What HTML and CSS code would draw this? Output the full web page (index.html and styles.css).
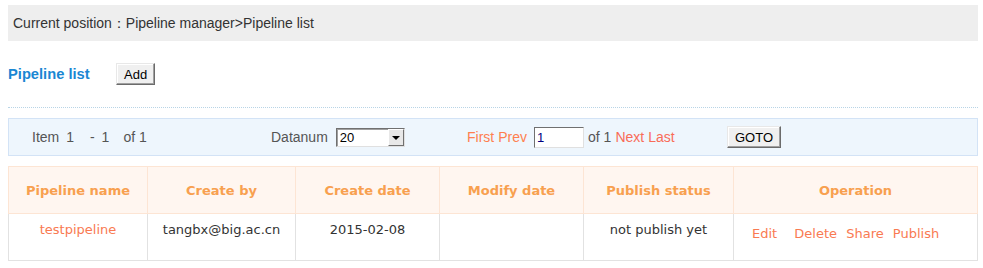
FILE: index.html
```html
<!DOCTYPE html>
<html lang="en">
  <head>
    <meta charset="UTF-8" />
    <title>Pipeline list</title>
    <link rel="stylesheet" href="styles.css">
  </head>
  <body>
    <div class="page">
      <div class="crumb">Current position：Pipeline manager&gt;Pipeline list</div>

      <div class="toolbar">
        <span class="list-title">Pipeline list</span>
        <button class="btn">Add</button>
      </div>

      <div class="pager">
        <div class="pager-items">
          Item <span class="num">1</span><span class="dash">-</span><span class="num">1</span><span class="of">of 1</span>
        </div>
        <div class="pager-size">
          Datanum
          <span class="select-wrap">
            <select class="select">
              <option>20</option>
              <option>50</option>
              <option>100</option>
            </select>
            <span class="select-arrow"></span>
          </span>
        </div>
        <div class="pager-nav">
          <a href="#" class="link-first">First</a>
          <a href="#" class="link-first">Prev</a>
          <input type="text" class="page-input" value="1">
          <span class="total">of 1</span>
          <a href="#" class="link-next">Next</a>
          <a href="#" class="link-next">Last</a>
        </div>
        <button class="btn btn-goto">GOTO</button>
      </div>

      <table class="grid">
        <colgroup>
          <col style="width: 139px">
          <col style="width: 148px">
          <col style="width: 144px">
          <col style="width: 144px">
          <col style="width: 150px">
          <col>
        </colgroup>
        <thead>
          <tr>
            <th>Pipeline name</th>
            <th>Create by</th>
            <th>Create date</th>
            <th>Modify date</th>
            <th>Publish status</th>
            <th>Operation</th>
          </tr>
        </thead>
        <tbody>
          <tr>
            <td><a href="#" class="name-link">testpipeline</a></td>
            <td>tangbx@big.ac.cn</td>
            <td>2015-02-08</td>
            <td></td>
            <td>not publish yet</td>
            <td class="ops">
              <a href="#">Edit</a>
              <a href="#" class="op-delete">Delete</a>
              <a href="#">Share</a>
              <a href="#">Publish</a>
            </td>
          </tr>
        </tbody>
      </table>
    </div>
  </body>
</html>
```

FILE: styles.css
```css
body {
  margin: 0;
  padding: 5px 6px 0 8px;
  background-color: #ffffff;
  font-family: "Liberation Sans", Arial, sans-serif;
  font-size: 14px;
  color: #333333;
}

.page {
  width: 970px;
}

.crumb {
  background-color: #eeeeee;
  height: 36px;
  line-height: 36px;
  padding-left: 5px;
  color: #333333;
}

.toolbar {
  display: flex;
  align-items: flex-start;
  height: 44px;
  margin-top: 17px;
  border-bottom: 1px dotted #b8d4e6;
  padding-bottom: 5px;
}

.list-title {
  color: #1a87d3;
  font-weight: bold;
  font-size: 14.7px;
  width: 108px;
  line-height: 32px;
}

.btn {
  font-family: "Liberation Sans", Arial, sans-serif;
  font-size: 13px;
  color: #000000;
  background-color: #f0f0f0;
  border: 1px solid;
  border-color: #e8e8e8 #6b6b6b #6b6b6b #e8e8e8;
  box-shadow: inset -1px -1px 0 #a0a0a0, inset 1px 1px 0 #ffffff;
  height: 22px;
  padding: 0 7px;
  margin-top: 5px;
}

.pager {
  display: flex;
  align-items: center;
  height: 36px;
  margin-top: 10px;
  background-color: #eef6fd;
  border: 1px solid #d3e3f6;
  color: #555555;
}

.pager-items {
  width: 239px;
  padding-left: 23px;
}

.pager-items .num {
  margin-left: 3px;
}

.pager-items .dash {
  margin-left: 16px;
  margin-right: 4px;
}

.pager-items .of {
  margin-left: 14px;
}

.pager-size {
  display: flex;
  align-items: center;
  width: 196px;
}

.select-wrap {
  position: relative;
  margin-left: 8px;
  display: inline-block;
}

.select {
  appearance: none;
  width: 69px;
  height: 19px;
  margin: 0;
  padding: 0 0 0 3px;
  font-family: "Liberation Sans", Arial, sans-serif;
  font-size: 13px;
  color: #000000;
  background-color: #ffffff;
  border: 1px solid;
  border-color: #707070 #e0e0e0 #e0e0e0 #707070;
  box-shadow: inset 1px 1px 0 #a0a0a0;
  display: block;
}

.select-arrow {
  position: absolute;
  right: 1px;
  top: 1px;
  width: 14px;
  height: 15px;
  background-color: #e8e8e8;
  border: 1px solid;
  border-color: #ffffff #707070 #707070 #ffffff;
  pointer-events: none;
}

.select-arrow::after {
  content: "";
  position: absolute;
  left: 3px;
  top: 6px;
  border-left: 4px solid transparent;
  border-right: 4px solid transparent;
  border-top: 4px solid #000000;
}

.pager-nav {
  display: flex;
  align-items: center;
  width: 260px;
}

.pager-nav a {
  text-decoration: none;
  margin-right: 4px;
}

.pager-nav .link-first + .page-input {
  margin-left: 3px;
}

.link-first {
  color: #ff7f4f;
}

.link-next {
  color: #f96c58;
}

.page-input {
  width: 50px;
  height: 21px;
  box-sizing: border-box;
  margin: 0 4px 0 0;
  padding: 0 2px;
  font-family: "Liberation Sans", Arial, sans-serif;
  font-size: 13px;
  color: #000080;
  border: 1px solid;
  border-color: #707070 #e0e0e0 #e0e0e0 #707070;
}

.total {
  margin-right: 4px;
}

.btn-goto {
  margin-top: 0;
  padding: 0 7px;
}

.grid {
  width: 970px;
  margin-top: 10px;
  border-collapse: collapse;
  table-layout: fixed;
  font-family: "DejaVu Sans", Verdana, sans-serif;
  font-size: 13px;
}

.grid thead tr {
  height: 47px;
}

.grid tbody tr {
  height: 47px;
}

.grid th {
  background-color: #fff6f0;
  border: 1px solid #fde5d4;
  color: #f8a04f;
  font-weight: bold;
  padding: 0;
}

.grid td {
  border: 1px solid #e2e2e2;
  text-align: center;
  vertical-align: top;
  padding: 8px 0 0 0;
  color: #333333;
}

.name-link {
  color: #f97a52;
  text-decoration: none;
}

.grid td.ops {
  text-align: left;
  padding: 12px 0 0 18px;
}

.ops a {
  color: #f97a52;
  text-decoration: none;
  margin-right: 5px;
}

.ops a.op-delete {
  margin-left: 8px;
}
```
